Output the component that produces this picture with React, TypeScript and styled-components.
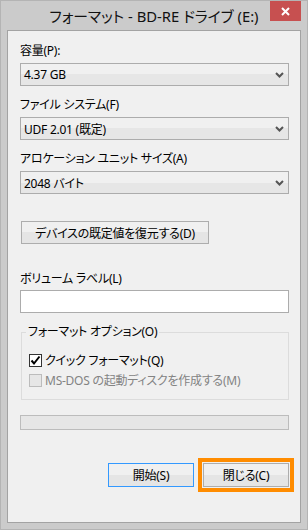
import styled, { createGlobalStyle } from "styled-components";

const GlobalStyle = createGlobalStyle`
	html, body {
		margin: 0;
		padding: 0;
		background: #cbcbcb;
	}
	* {
		box-sizing: border-box;
	}
`;

const FONT = `"Noto Sans", "Noto Sans CJK JP", sans-serif`;

const Window = styled.div`
	width: 308px;
	height: 530px;
	display: flex;
	flex-direction: column;
	background: #cbcbcb;
	border: 1px solid #b4b4b4;
	padding: 0 6px 6px 6px;
	font-family: ${FONT};
	font-feature-settings: "palt";
	color: #000;
`;

const TitleBar = styled.div`
	height: 29px;
	display: grid;
	grid-template-columns: 37px 1fr 37px;
	align-items: start;
`;

const Title = styled.div`
	grid-column: 2;
	text-align: center;
	font-size: 14.8px;
	line-height: 31px;
	color: #111;
	white-space: nowrap;
`;

const CloseButton = styled.div`
	grid-column: 3;
	width: 31px;
	height: 20px;
	margin-left: 6px;
	background: #c75050;
	display: flex;
	align-items: center;
	justify-content: center;
`;

const Client = styled.div`
	flex: 1;
	display: flex;
	flex-direction: column;
	background: #f0f0f0;
	border: 1px solid #a3a3a3;
	padding: 12px 11px 0 12px;
	font-size: 12px;
	letter-spacing: -0.25px;
`;

const Label = styled.div<{ $top: number }>`
	line-height: 16px;
	height: 16px;
	margin-top: ${({ $top }) => $top}px;
	white-space: nowrap;
`;

const SelectBox = styled.div`
	height: 23px;
	margin-top: 4px;
	border: 1px solid #acacac;
	background: linear-gradient(#f0f0f0 50%, #e6e6e6 50%);
	display: flex;
	align-items: center;
	justify-content: space-between;
	padding: 0 4px 0 3px;
`;

const Button = styled.div<{ $width: number; $focused?: boolean }>`
	width: ${({ $width }) => $width}px;
	height: 24px;
	border: 1px solid ${({ $focused }) => ($focused ? "#3399ff" : "#adadad")};
	background: linear-gradient(#f0f0f0 50%, #e5e5e5 50%);
	display: flex;
	align-items: center;
	justify-content: center;
	white-space: nowrap;
`;

const ResetButton = styled(Button)`
	height: 23px;
	margin-top: 27px;
	margin-left: 1px;
`;

const TextInput = styled.div`
	height: 23px;
	margin-top: 3px;
	border: 1px solid #acacac;
	background: #fff;
`;

const GroupBox = styled.fieldset`
	margin: 11px 0 0 1px;
	padding: 0 0 11px 4px;
	border: 1px solid #dcdcdc;
	display: flex;
	flex-direction: column;
	gap: 4px;
`;

const Legend = styled.legend`
	padding: 0 2px;
	line-height: 16px;
`;

const CheckRow = styled.div<{ $disabled?: boolean }>`
	display: flex;
	align-items: center;
	gap: 3px;
	height: 16px;
	margin-left: 3px;
	color: ${({ $disabled }) => ($disabled ? "#838383" : "#000")};
	white-space: nowrap;
	&:first-of-type {
		margin-top: 12px;
	}
`;

const CheckBox = styled.span<{ $disabled?: boolean }>`
	width: 13px;
	height: 13px;
	flex: none;
	border: 1px solid ${({ $disabled }) => ($disabled ? "#bcbcbc" : "#333")};
	background: ${({ $disabled }) => ($disabled ? "#e6e6e6" : "#fff")};
	display: flex;
	align-items: center;
	justify-content: center;
`;

const Progress = styled.div`
	height: 15px;
	margin-top: 15px;
	border: 1px solid #bcbcbc;
	background: #e6e6e6;
`;

const ButtonRow = styled.div`
	margin-top: 33px;
	display: flex;
	justify-content: flex-end;
	gap: 9px;
`;

const Highlighted = styled.div`
	outline: 4px solid #ff8c00;
	outline-offset: 1px;
`;

function Chevron() {
	return (
		<svg width="9" height="6" viewBox="0 0 9 6">
			<path d="M1 1 L4.5 4.5 L8 1" fill="none" stroke="#555" strokeWidth="2" />
		</svg>
	);
}

function Select({ value }: { value: string }) {
	return (
		<SelectBox>
			<span>{value}</span>
			<Chevron />
		</SelectBox>
	);
}

function App() {
	return (
		<>
			<GlobalStyle />
			<Window>
				<TitleBar>
					<Title>フォーマット - BD-RE ドライブ (E:)</Title>
					<CloseButton>
						<svg width="9" height="9" viewBox="0 0 9 9">
							<path d="M1 1 L8 8 M8 1 L1 8" stroke="#fff" strokeWidth="2" />
						</svg>
					</CloseButton>
				</TitleBar>
				<Client>
					<Label $top={0}>容量(P):</Label>
					<Select value="4.37 GB" />
					<Label $top={11}>ファイル システム(F)</Label>
					<Select value="UDF 2.01 (既定)" />
					<Label $top={11}>アロケーション ユニット サイズ(A)</Label>
					<Select value="2048 バイト" />
					<ResetButton $width={188}>デバイスの既定値を復元する(D)</ResetButton>
					<Label $top={27}>ボリューム ラベル(L)</Label>
					<TextInput />
					<GroupBox>
						<Legend>フォーマット オプション(O)</Legend>
						<CheckRow>
							<CheckBox>
								<svg width="11" height="11" viewBox="0 0 11 11">
									<path d="M1.5 5.5 L4 8.5 L9.5 1.5" fill="none" stroke="#000" strokeWidth="2" />
								</svg>
							</CheckBox>
							クイック フォーマット(Q)
						</CheckRow>
						<CheckRow $disabled>
							<CheckBox $disabled />
							MS-DOS の起動ディスクを作成する(M)
						</CheckRow>
					</GroupBox>
					<Progress />
					<ButtonRow>
						<Button $width={86} $focused>
							開始(S)
						</Button>
						<Highlighted>
							<Button $width={86}>閉じる(C)</Button>
						</Highlighted>
					</ButtonRow>
				</Client>
			</Window>
		</>
	);
}

export default App;
